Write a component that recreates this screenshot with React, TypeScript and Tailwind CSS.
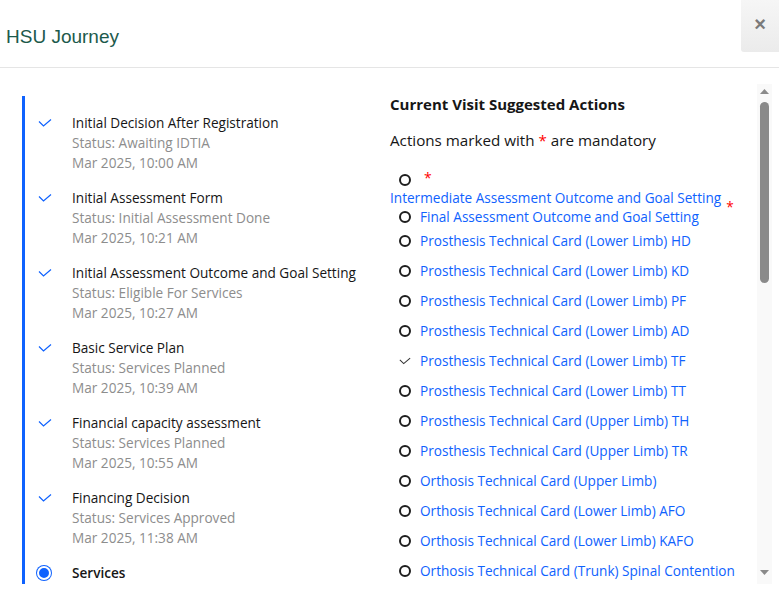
import React from "react";

const timeline = [
  { title: "Initial Decision After Registration", status: "Status: Awaiting IDTIA", date: "Mar 2025, 10:00 AM" },
  { title: "Initial Assessment Form", status: "Status: Initial Assessment Done", date: "Mar 2025, 10:21 AM" },
  { title: "Initial Assessment Outcome and Goal Setting", status: "Status: Eligible For Services", date: "Mar 2025, 10:27 AM" },
  { title: "Basic Service Plan", status: "Status: Services Planned", date: "Mar 2025, 10:39 AM" },
  { title: "Financial capacity assessment", status: "Status: Services Planned", date: "Mar 2025, 10:55 AM" },
  { title: "Financing Decision", status: "Status: Services Approved", date: "Mar 2025, 11:38 AM" },
];

const actions: { label: string; done?: boolean }[] = [
  { label: "Prosthesis Technical Card (Lower Limb) HD" },
  { label: "Prosthesis Technical Card (Lower Limb) KD" },
  { label: "Prosthesis Technical Card (Lower Limb) PF" },
  { label: "Prosthesis Technical Card (Lower Limb) AD" },
  { label: "Prosthesis Technical Card (Lower Limb) TF", done: true },
  { label: "Prosthesis Technical Card (Lower Limb) TT" },
  { label: "Prosthesis Technical Card (Upper Limb) TH" },
  { label: "Prosthesis Technical Card (Upper Limb) TR" },
  { label: "Orthosis Technical Card (Upper Limb)" },
  { label: "Orthosis Technical Card (Lower Limb) AFO" },
  { label: "Orthosis Technical Card (Lower Limb) KAFO" },
  { label: "Orthosis Technical Card (Trunk) Spinal Contention" },
];

const font = { fontFamily: '"Open Sans", "Noto Sans", sans-serif' };

function Check({ color }: { color: string }) {
  return (
    <svg width="14" height="9" viewBox="0 0 14 9" fill="none" className="block">
      <path d="M1 2.5 L5.5 7 L13 0.5" stroke={color} strokeWidth="1.2" />
    </svg>
  );
}

function Ring() {
  return <span className="block shrink-0 w-[12px] h-[12px] rounded-full border-[2.5px] border-[#1e1e1e] box-border" />;
}

export default function App() {
  return (
    <div className="w-[779px] h-[599px] bg-white overflow-hidden flex flex-col" style={font}>
      {/* header */}
      <div className="h-[68px] shrink-0 border-b border-[#e5e5e5] flex items-start justify-between">
        <div
          className="pl-[6px] pt-[25px] text-[19px] leading-[24px] text-[#1c5a4b]"
          style={{ fontFamily: '"Liberation Sans", Arial, sans-serif' }}
        >
          HSU Journey
        </div>
        <div
          className="w-[38px] h-[52px] bg-gradient-to-b from-[#f6f6f6] to-[#ebebeb] rounded-bl-[3px] flex items-center justify-center text-[#7a7a7a] text-[20px] font-bold pb-[4px]"
          style={{ fontFamily: '"Liberation Sans", Arial, sans-serif' }}
        >
          ×
        </div>
      </div>

      {/* body */}
      <div className="pt-[16px] flex">
        <div className="flex-1 h-[500px] overflow-hidden flex">
          {/* left timeline */}
          <div className="w-[390px] shrink-0 pt-[12px] pl-[22px]">
            <div className="border-l-[3px] border-[#0f62fe] pt-[17px] h-[520px]">
              {timeline.map((t) => (
                <div key={t.title} className="flex mb-[15px]">
                  <div className="w-[47px] shrink-0 pl-[13px] pt-[6px]">
                    <Check color="#0f62fe" />
                  </div>
                  <div className="text-[13.6px] leading-[20px] whitespace-nowrap">
                    <div className="text-[#161616]">{t.title}</div>
                    <div className="text-[#8d8d8d]">{t.status}</div>
                    <div className="text-[#8d8d8d]">{t.date}</div>
                  </div>
                </div>
              ))}
              <div className="flex">
                <div className="w-[47px] shrink-0 pl-[12px] pt-[3px]">
                  <span className="block w-[14px] h-[14px] rounded-full bg-[#0f62fe] ring-[1px] ring-[#0f62fe] border-[2px] border-white box-border" />
                </div>
                <div className="text-[13.6px] leading-[20px] font-semibold text-[#161616]">Services</div>
              </div>
            </div>
          </div>

          {/* right actions */}
          <div className="flex-1 pt-[10px] whitespace-nowrap">
            <div className="text-[15px] leading-[20px] font-bold text-[#161616]">Current Visit Suggested Actions</div>
            <div className="mt-[14px] text-[15.2px] leading-[24px] text-[#161616]">
              Actions marked with <span className="text-[#ff0000]">*</span> are mandatory
            </div>
            <div className="mt-[19px] h-[18px] pl-[9px] flex items-start gap-[13px]">
              <span className="mt-[3px]"><Ring /></span>
              <span className="text-[#ff0000] text-[14px] leading-[14px]">*</span>
            </div>
            <div className="text-[13.6px] leading-[18px] text-[#0f62fe]">
              Intermediate Assessment Outcome and Goal Setting
              <span className="relative top-[9px] ml-[5px] text-[#ff0000]">*</span>
            </div>
            <div className="flex items-center h-[20px] pl-[9px] gap-[9px] mb-[4px]">
              <Ring />
              <span className="text-[13.6px] leading-[20px] text-[#0f62fe]">Final Assessment Outcome and Goal Setting</span>
            </div>
            {actions.map((a) => (
              <div key={a.label} className="flex items-center h-[20px] pl-[9px] gap-[9px] mb-[10px]">
                {a.done ? (
                  <span className="w-[12px] flex items-center"><Check color="#333" /></span>
                ) : (
                  <Ring />
                )}
                <span className="text-[13.6px] leading-[20px] text-[#0f62fe]">{a.label}</span>
              </div>
            ))}
          </div>
        </div>

        {/* scrollbar */}
        <div className="w-[15px] h-[500px] bg-[#f9f9f9] flex flex-col items-center">
          <svg width="9" height="6" viewBox="0 0 9 6" className="mt-[5px]">
            <path d="M0 5 L4.5 0 L9 5 Z" fill="#8a8a8a" />
          </svg>
          <div className="mt-[7px] w-[9px] h-[181px] rounded-full bg-[#8a8a8a]" />
          <div className="flex-1" />
          <svg width="9" height="6" viewBox="0 0 9 6" className="mb-[8px]">
            <path d="M0 0 L9 0 L4.5 5 Z" fill="#8a8a8a" />
          </svg>
        </div>
        <div className="w-[7px]" />
      </div>
    </div>
  );
}
